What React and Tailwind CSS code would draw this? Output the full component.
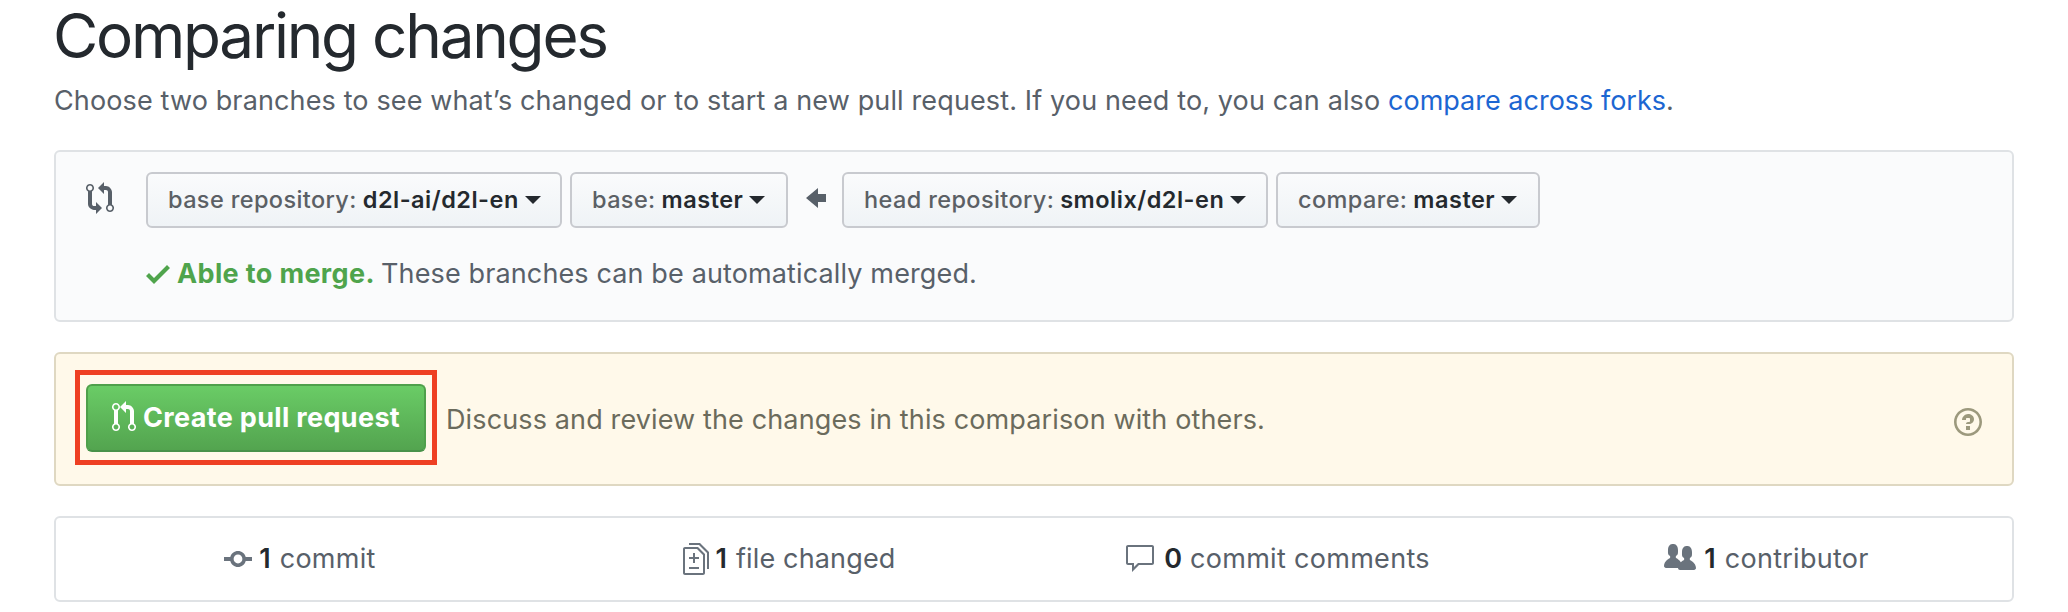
import React from "react";

const ICONS = {
  compare: "M5 12H4c-.27-.02-.48-.11-.69-.31-.21-.2-.3-.42-.31-.69V4.72A1.993 1.993 0 002 1a1.993 1.993 0 00-1 3.72V11c.03.78.34 1.47.94 2.06.6.59 1.28.91 2.06.94h1v2l3-3-3-3v2zM2 1.8c.66 0 1.2.55 1.2 1.2 0 .65-.55 1.2-1.2 1.2C1.35 4.2.8 3.65.8 3c0-.65.55-1.2 1.2-1.2zm11 9.48V5c-.03-.78-.34-1.47-.94-2.06-.6-.59-1.28-.91-2.06-.94H9V0L6 3l3 3V4h1c.27.02.48.11.69.31.21.2.3.42.31.69v6.28A1.993 1.993 0 0012 15a1.993 1.993 0 001-3.72zm-1 2.92c-.66 0-1.2-.55-1.2-1.2 0-.65.55-1.2 1.2-1.2.65 0 1.2.55 1.2 1.2 0 .65-.55 1.2-1.2 1.2z",
  pull: "M11 11.28V5c-.03-.78-.34-1.47-.94-2.06C9.46 2.35 8.78 2.03 8 2H7V0L4 3l3 3V4h1c.27.02.48.11.69.31.21.2.3.42.31.69v6.28A1.993 1.993 0 0010 15a1.993 1.993 0 001-3.72zm-1 2.92c-.66 0-1.2-.55-1.2-1.2 0-.65.55-1.2 1.2-1.2.65 0 1.2.55 1.2 1.2 0 .65-.55 1.2-1.2 1.2zM4 3c0-1.11-.89-2-2-2a1.993 1.993 0 00-1 3.72v6.56A1.993 1.993 0 002 15a1.993 1.993 0 001-3.72V4.72c.59-.34 1-.98 1-1.72zm-.8 10c0 .66-.55 1.2-1.2 1.2-.65 0-1.2-.55-1.2-1.2 0-.65.55-1.2 1.2-1.2.65 0 1.2.55 1.2 1.2zM2 4.2C1.34 4.2.8 3.65.8 3c0-.65.55-1.2 1.2-1.2.65 0 1.2.55 1.2 1.2 0 .65-.55 1.2-1.2 1.2z",
  check: "M12 5l-8 8-4-4 1.5-1.5L4 10l6.5-6.5L12 5z",
  arrow: "M6 3L0 8l6 5v-3h4V6H6V3z",
  question: "M6 10h2v2H6v-2zm4-3.5C10 8.64 8 9 8 9H6c0-.55.45-1 1-1h.5c.28 0 .5-.22.5-.5v-1c0-.28-.22-.5-.5-.5h-1c-.28 0-.5.22-.5.5V7H4c0-1.5 1.5-3 3-3s3 1 3 2.5zM7 2.3c3.14 0 5.7 2.56 5.7 5.7s-2.56 5.7-5.7 5.7A5.71 5.71 0 011.3 8c0-3.14 2.56-5.7 5.7-5.7zM7 1C3.14 1 0 4.14 0 8s3.14 7 7 7 7-3.14 7-7-3.14-7-7-7z",
  commit: "M10.86 7c-.45-1.72-2-3-3.86-3-1.86 0-3.41 1.28-3.86 3H0v2h3.14c.45 1.72 2 3 3.86 3 1.86 0 3.41-1.28 3.86-3H14V7h-3.14zM7 10.2c-1.22 0-2.2-.98-2.2-2.2 0-1.22.98-2.2 2.2-2.2 1.22 0 2.2.98 2.2 2.2 0 1.22-.98 2.2-2.2 2.2z",
  diff: "M6 7h2v1H6v2H5V8H3V7h2V5h1v2zm-3 6h5v-1H3v1zM7.5 2L11 5.5V15c0 .55-.45 1-1 1H1c-.55 0-1-.45-1-1V3c0-.55.45-1 1-1h6.5zM10 6L7 3H1v12h9V6zM8.5 0H3v1h5l4 4v8h1V4.5L8.5 0z",
  comment: "M14 1H2c-.55 0-1 .45-1 1v8c0 .55.45 1 1 1h2v3.5L7.5 11H14c.55 0 1-.45 1-1V2c0-.55-.45-1-1-1zm0 9H7l-2 2v-2H2V2h12v8z",
  people: "M16 12.999c0 .439-.45 1-1 1H7.995c-.539 0-.994-.447-.995-.999H1c-.54 0-1-.561-1-1 0-2.634 3-4 3-4s.229-.409 0-1c-.841-.621-1.058-.59-1-3 .058-2.419 1.367-3 2.5-3s2.442.58 2.5 3c.058 2.41-.159 2.379-1 3-.229.59 0 1 0 1s1.549.711 2.42 2.088C9.196 9.369 10 8.999 10 8.999s.229-.409 0-1c-.841-.62-1.058-.59-1-3 .058-2.419 1.367-3 2.5-3s2.437.581 2.495 3c.059 2.41-.158 2.38-1 3-.229.59 0 1 0 1s3.005 1.366 3.005 4",
};

function Icon({ name, width, className = "" }) {
  return (
    <svg
      viewBox={`0 0 ${width} 16`}
      width={width * 2}
      height={32}
      fill="currentColor"
      fillRule="evenodd"
      aria-hidden="true"
      className={`shrink-0 ${className}`}
    >
      <path d={ICONS[name]} />
    </svg>
  );
}

function Select({ label, value, className }) {
  return (
    <button
      type="button"
      className={`flex h-14 shrink-0 items-center whitespace-nowrap rounded-[6px] border-2 border-[#c8cacf] bg-linear-to-b from-[#fafbfc] to-[#eff3f6] pl-5 text-[23.5px] leading-[34px] text-[#24292e] ${className}`}
    >
      <span className="font-medium tracking-[0.38px] text-[#5b6065]">{label}</span>
      <span className="ml-[6px] font-semibold tracking-[0.5px]">{value}</span>
      <svg width="16" height="8" viewBox="0 0 16 8" className="ml-[6px] shrink-0" aria-hidden="true">
        <path d="M0 0h16L8 8z" fill="currentColor" />
      </svg>
    </button>
  );
}

function Stat({ icon, width, iconClass, count, countClass, label, labelClass }) {
  return (
    <li className="flex items-center justify-center whitespace-nowrap">
      <Icon name={icon} width={width} className={`text-[#6a737d] ${iconClass}`} />
      <span className={`font-semibold text-[#24292e] ${countClass}`}>{count}</span>
      <span className={labelClass}>{label}</span>
    </li>
  );
}

export default function App() {
  return (
    <main className="h-[612px] bg-white px-[54px] font-['Inter',sans-serif] text-[27px] leading-[40px] text-[#586069]">
      <h1 className="-ml-px h-[70px] whitespace-nowrap text-[62px] font-normal leading-[71px] tracking-[-2.25px] text-[#24292e]">
        Comparing changes
      </h1>
      <p className="h-[60px] whitespace-nowrap leading-[61px] tracking-[0.13px]">
        Choose two branches to see what’s changed or to start a new pull request. If you need to, you can also{" "}
        <a href="#forks" className="tracking-[0px] text-[#1c66d2]">compare across forks</a>.
      </p>

      <section className="mt-5 flex h-[172px] rounded-[6px] border-2 border-[#dfe2e5] bg-[#fafbfc] pl-[30px] pt-5">
        <Icon name="compare" width={14} className="mt-[10px]" />
        <div className="ml-8">
          <div className="flex items-center">
            <Select label="base repository:" value="d2l-ai/d2l-en" className="w-[416px]" />
            <Select label="base:" value="master" className="ml-2 w-[218px]" />
            <Icon name="arrow" width={10} className="ml-[18px] mr-4 -mt-1" />
            <Select label="head repository:" value="smolix/d2l-en" className="w-[426px]" />
            <Select label="compare:" value="master" className="ml-2 w-[264px]" />
          </div>
          <div className="mt-[26px] flex items-center whitespace-nowrap">
            <Icon name="check" width={12} className="text-[#4fa44c]" />
            <span className="ml-[7px] w-[197px] font-bold tracking-[0.36px] text-[#4fa44c]">Able to merge.</span>
            <span className="ml-[7px] tracking-[0.13px]">These branches can be automatically merged.</span>
          </div>
        </div>
      </section>

      <section className="mt-[30px] flex h-[134px] items-center rounded-[6px] border-2 border-[#dfd8c2] bg-[#fff9ea] pl-[19px] pr-[30px] text-[#6b6b5c]">
        <div className="-mt-[3px] h-[95px] w-[362px] shrink-0 border-[5px] border-[#ee4023] px-[6px] py-[9px]">
          <button
            type="button"
            className="flex h-[68px] w-full items-center whitespace-nowrap rounded-[6px] border-2 border-[#4fa04b] border-b-[#48924a] bg-linear-to-b from-[#6acc66] to-[#53a44f] pl-6 text-white"
          >
            <Icon name="pull" width={12} className="-mt-[3px]" />
            <span className="ml-[7px] font-bold tracking-[0.34px]">Create pull request</span>
          </button>
        </div>
        <p className="ml-[9px] mt-[2px] grow whitespace-nowrap tracking-[0.13px]">
          Discuss and review the changes in this comparison with others.
        </p>
        <Icon name="question" width={14} className="mt-[6px] text-[#9c997d]" />
      </section>

      <ul className="mt-[30px] grid h-[86px] grid-cols-4 rounded-[6px] border-2 border-[#dfe2e5]">
        <Stat icon="commit" width={14} iconClass="-ml-px" count="1" countClass="ml-[7px]" label="commit" labelClass="ml-[9px] tracking-[0.3px]" />
        <Stat icon="diff" width={13} iconClass="-ml-px" count="1" countClass="ml-[7px]" label="file changed" labelClass="ml-[9px] tracking-[0.15px]" />
        <Stat icon="comment" width={16} iconClass="-ml-[3px]" count="0" countClass="ml-2" label="commit comments" labelClass="ml-2 tracking-[0.3px]" />
        <Stat icon="people" width={16} iconClass="-ml-[2px] -mt-[2px]" count="1" countClass="ml-2" label="contributor" labelClass="ml-[9px] tracking-[0.27px]" />
      </ul>
    </main>
  );
}
